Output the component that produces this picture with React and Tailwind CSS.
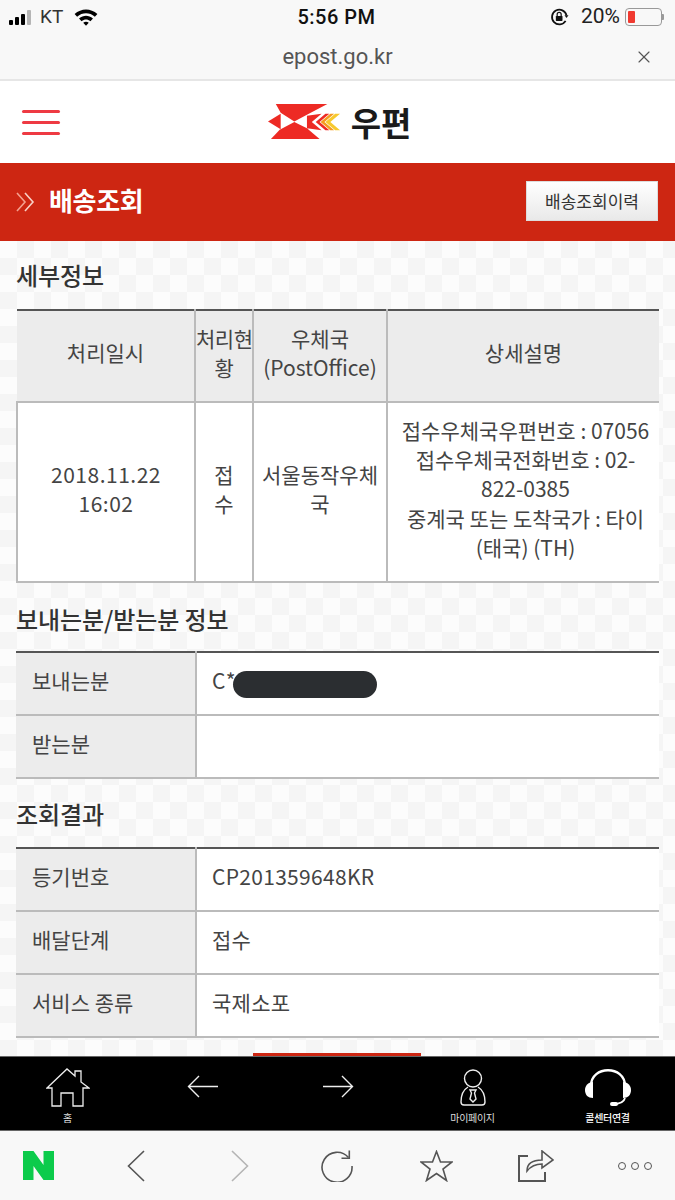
import React from "react";
import { X } from "lucide-react";

const cjk = "font-['Noto_Sans_CJK_KR','Noto_Sans',sans-serif]";

const StatusBar = () => (
  <div className="h-[34px] flex items-center justify-between pl-[9px] pr-[11px] text-[#111] font-['Roboto',sans-serif]">
    <div className="flex items-center w-[200px]">
      <div className="flex items-end gap-[2px] h-[15px]">
        <span className="w-[4px] h-[5px] bg-black rounded-[1px]" />
        <span className="w-[4px] h-[8px] bg-black rounded-[1px]" />
        <span className="w-[4px] h-[11px] bg-black rounded-[1px]" />
        <span className="w-[4px] h-[15px] bg-[#b5b5b5] rounded-[1px]" />
      </div>
      <span className="ml-[9px] text-[19px] text-[#333]">KT</span>
      <svg className="ml-[11px]" width="24" height="18" viewBox="0 0 20 15">
        <path d="M0.5 5 C6 0 14 0 19.5 5 L17.4 7.2 C13 3.4 7 3.4 2.6 7.2Z" fill="#000" />
        <path d="M4.2 8.8 C8 5.6 12 5.6 15.8 8.8 L13.7 11 C11.3 9.2 8.7 9.2 6.3 11Z" fill="#000" />
        <path d="M7.7 12.2 C9 11.2 11 11.2 12.3 12.2 L10 14.8Z" fill="#000" />
      </svg>
    </div>
    <span className="text-[20px] font-medium tracking-[0.5px]">5:56 PM</span>
    <div className="flex items-center justify-end w-[200px]">
      <svg width="19" height="20" viewBox="0 0 17 18" fill="none">
        <path d="M14 12.5 A6.6 6.6 0 1 1 14.8 7.5" stroke="#111" strokeWidth="1.6" />
        <path d="M13 7.5 L16.6 7.5 L14.8 10Z" fill="#111" />
        <rect x="5.2" y="8" width="6" height="4.6" rx="0.6" fill="#111" />
        <path d="M6.4 8 V6.6 A1.8 1.8 0 0 1 10 6.6 V8" stroke="#111" strokeWidth="1.1" />
      </svg>
      <span className="ml-[12px] text-[21px] text-[#222]">20%</span>
      <div className="ml-[5px] w-[37px] h-[18px] border border-[#999] rounded-[4px] p-[2px]">
        <div className="w-[7px] h-full bg-[#f03a30] rounded-[1px]" />
      </div>
      <span className="w-[2px] h-[6px] bg-[#999] rounded-r-[1px]" />
    </div>
  </div>
);

const Logo = () => (
  <svg width="74" height="36" viewBox="0 0 76 37">
    <path d="M8 0 H61 L40 11 L27 18 L13 9 Z" fill="#ed2a24" />
    <path d="M0 18 L13 10 V26 Z" fill="#ed2a24" />
    <path d="M3 36 L12 26.5 L27 18.5 L40 25 L53 36 Z" fill="#ed2a24" />
    <path d="M40 12 L55 10 L45 18.5 L55 27 L40 25 Z" fill="#ed2a24" />
    <path d="M59 10 L49 18.5 L59 27 H63 L53 18.5 L63 10 Z" fill="#ed2a24" />
    <path d="M64 10 L54 18.5 L64 27 H68 L58 18.5 L68 10 Z" fill="#f59b1f" />
    <path d="M69 10 L59 18.5 L69 27 H74 L64 18.5 L74 10 Z" fill="#f7c92e" />
  </svg>
);

const Header = () => (
  <div className="h-[82px] bg-white flex items-center relative">
    <div className="ml-[22px] flex flex-col gap-[8px] w-[38px]">
      <span className="h-[3px] bg-[#ee3a43] rounded-full" />
      <span className="h-[3px] bg-[#ee3a43] rounded-full" />
      <span className="h-[3px] bg-[#ee3a43] rounded-full" />
    </div>
    <div className="flex-1 flex justify-center items-center pr-[56px]">
      <Logo />
      <span className={`ml-[9px] text-[33px] leading-none font-bold text-[#1a1a1a] ${cjk}`}>우편</span>
    </div>
  </div>
);

const SectionTitle = ({ children, className }) => (
  <h2 className={`text-[24px] leading-[32px] font-medium text-[#333] tracking-[-0.1px] ${className}`}>{children}</h2>
);

const DetailTable = () => (
  <table className="w-[643px] table-fixed border-collapse border-t-2 border-t-[#555] text-[21px] leading-[29px] text-[#444] text-center">
    <colgroup>
      <col className="w-[178px]" />
      <col className="w-[58px]" />
      <col className="w-[134px]" />
      <col />
    </colgroup>
    <thead>
      <tr className="h-[92px] bg-[#ececec]">
        <th className="font-normal pb-[7px] border-2 border-t-0 border-l-0 border-[#bbb]">처리일시</th>
        <th className="font-normal pb-[7px] whitespace-nowrap tracking-[-0.5px] border-2 border-t-0 border-[#bbb]">처리현<br />황</th>
        <th className="font-normal pb-[7px] border-2 border-t-0 border-[#bbb]">우체국<br />(PostOffice)</th>
        <th className="font-normal pb-[7px] border-b-2 border-[#bbb]">상세설명</th>
      </tr>
    </thead>
    <tbody>
      <tr className="h-[180px] bg-white">
        <td className="border-2 border-[#bbb] pb-[7px] tracking-[0.5px]">2018.11.22<br />16:02</td>
        <td className="border-2 border-[#bbb] pb-[7px]">접<br />수</td>
        <td className="border-2 border-[#bbb] pb-[7px] px-[8px]">서울동작우체국</td>
        <td className="border-b-2 border-[#bbb] pb-[6px] pl-[4px] whitespace-nowrap leading-[29.3px]">
          접수우체국우편번호 : 07056<br />접수우체국전화번호 : 02-<br />822-0385<br />중계국 또는 도착국가 : 타이<br />(태국) (TH)
        </td>
      </tr>
    </tbody>
  </table>
);

const InfoTable = ({ rows }) => (
  <table className="w-[643px] table-fixed border-collapse border-t-2 border-t-[#555] text-[21px] text-[#444]">
    <colgroup>
      <col className="w-[180px]" />
      <col />
    </colgroup>
    <tbody>
      {rows.map((row) => (
        <tr key={row[0]} className="h-[63px]">
          <th className="font-normal text-left pl-[16px] pb-[5px] bg-[#ececec] border-r-2 border-b-2 border-[#bbb]">{row[0]}</th>
          <td className="bg-white pl-[15px] pb-[5px] border-b-2 border-[#bbb] tracking-[0.3px]">{row[1]}</td>
        </tr>
      ))}
    </tbody>
  </table>
);

const Sender = () => (
  <div className="flex items-center">
    <span>C*</span>
    <span className="-ml-[3px] mt-[7px] w-[144px] h-[27px] rounded-full bg-[#2b2e31]" />
  </div>
);

const BottomNav = () => (
  <div className={`h-[75px] bg-black border-y border-[#666] grid grid-cols-5 text-[10px] text-[#ddd] ${cjk}`}>
    <div className="flex flex-col items-center pt-[11px]">
      <svg width="44" height="40" viewBox="0 0 44 40" fill="none" stroke="#eee" strokeWidth="1.3">
        <path d="M1 20 L21 1 L29 8 V3 H35 V14 L43 20 H37 V38 H27 V25 H15 V38 H6 V20 Z" />
      </svg>
      <span className="leading-none mt-[5px]">홈</span>
    </div>
    <div className="flex justify-center pt-[18px]">
      <svg width="32" height="24" viewBox="0 0 32 24" fill="none" stroke="#eee" strokeWidth="1.4">
        <path d="M31 11.5 H2 M12 1 L1.5 11.5 L12 22" />
      </svg>
    </div>
    <div className="flex justify-center pt-[18px]">
      <svg width="32" height="24" viewBox="0 0 32 24" fill="none" stroke="#eee" strokeWidth="1.4">
        <path d="M1 11.5 H30 M20 1 L30.5 11.5 L20 22" />
      </svg>
    </div>
    <div className="flex flex-col items-center pt-[12px]">
      <svg width="26" height="38" viewBox="0 0 26 38" fill="none" stroke="#eee" strokeWidth="1.4">
        <circle cx="13" cy="9.5" r="8.5" />
        <path d="M8 18 C3 21 1 27 1 33 Q1 36 4 36 H22 Q25 36 25 33 C25 27 23 21 18 18" />
        <path d="M10 21 H16 L14.5 24 L16 30 L13 33 L10 30 L11.5 24 Z" />
      </svg>
      <span className="leading-none mt-[6px] tracking-[-0.3px]">마이페이지</span>
    </div>
    <div className="flex flex-col items-center pt-[11px]">
      <svg width="46" height="40" viewBox="0 0 46 40" fill="none">
        <path d="M6 18 C6 -3 40 -3 40 18" stroke="#fff" strokeWidth="2.4" />
        <path d="M8 14 C3 14 0 18 0 22 C0 27 3 30 8 30Z" fill="#fff" />
        <path d="M38 14 C43 14 46 18 46 22 C46 27 43 30 38 30Z" fill="#fff" />
        <path d="M40 30 C39 34 34 36 28 36" stroke="#fff" strokeWidth="1.8" />
        <rect x="25" y="34" width="8" height="4" rx="2" fill="#fff" />
      </svg>
      <span className="leading-none mt-[5px] font-medium tracking-[-0.3px] text-white">콜센터연결</span>
    </div>
  </div>
);

const SafariBar = () => (
  <div className="h-[69px] bg-[#f8f8f8] flex items-center pl-[23px]">
    <svg width="31" height="29" viewBox="0 0 31 29">
      <path d="M0 0 H10.5 L20.5 14 V0 H31 V29 H20.5 L10.5 15 V29 H0 Z" fill="#0ccb4b" />
    </svg>
    <svg className="ml-[73px]" width="18" height="32" viewBox="0 0 18 32" fill="none" stroke="#555" strokeWidth="1.6">
      <path d="M17 1 L1.5 16 L17 31" />
    </svg>
    <svg className="ml-[86px]" width="18" height="32" viewBox="0 0 18 32" fill="none" stroke="#b5b5b5" strokeWidth="1.6">
      <path d="M1 1 L16.5 16 L1 31" />
    </svg>
    <svg className="ml-[72px]" width="32" height="32" viewBox="0 0 32 32" fill="none" stroke="#555" strokeWidth="1.6">
      <path d="M31 16 A15 15 0 1 1 27.5 7.6" />
      <path d="M20.5 8.3 H28.3 V0.5" />
    </svg>
    <svg className="ml-[67px]" width="33" height="32" viewBox="0 0 33 32" fill="none" stroke="#555" strokeWidth="1.6">
      <path d="M16.5 1.5 L20.5 12 H32 L23 19 L26.5 30.5 L16.5 23.5 L6.5 30.5 L10 19 L1 12 H12.5 Z" />
    </svg>
    <svg className="ml-[65px]" width="36" height="32" viewBox="0 0 36 32" fill="none" stroke="#555" strokeWidth="1.6">
      <path d="M10 6 H1 V31 H27 V22" strokeWidth="2" />
      <path d="M9 21 C9 14 14 10 24 10 V1 L35 10 L24 18 V14 C17 14 13 16 9 21 Z" />
    </svg>
    <div className="ml-[64px] flex gap-[5px]">
      <span className="w-[8px] h-[8px] rounded-full border-[1.5px] border-[#555]" />
      <span className="w-[8px] h-[8px] rounded-full border-[1.5px] border-[#555]" />
      <span className="w-[8px] h-[8px] rounded-full border-[1.5px] border-[#555]" />
    </div>
  </div>
);

export default function App() {
  return (
    <div className={`w-[675px] h-[1200px] flex flex-col overflow-hidden bg-white ${cjk}`}>
      <div className="bg-[#f8f8f8] border-b-2 border-[#e6e6e6] h-[81px]">
        <StatusBar />
        <div className="h-[45px] flex items-center justify-center relative text-[22px] text-[#555] font-['Roboto',sans-serif]">
          <span>epost.go.kr</span>
          <X className="absolute right-[21px] top-[13px]" size={20} strokeWidth={1.4} color="#555" />
        </div>
      </div>
      <Header />
      <div className="h-[78px] bg-[#cd2612] flex items-center justify-between pl-[15px] pr-[17px]">
        <div className="flex items-center">
          <svg width="22" height="22" viewBox="0 0 22 22" fill="none" strokeWidth="1.6">
            <path d="M2 2 L10 11 L2 20" stroke="#f4a08f" />
            <path d="M10 2 L18 11 L10 20" stroke="#f8d0c6" />
          </svg>
          <span className="ml-[12px] mb-[6px] text-[26px] font-bold text-white tracking-[-0.3px]">배송조회</span>
        </div>
        <button className="w-[132px] h-[40px] mb-[2px] bg-gradient-to-b from-white to-[#e9e9e9] border border-[#ddd] text-[17px] text-[#333]">
          배송조회이력
        </button>
      </div>
      <div className="flex-1 min-h-0 overflow-hidden pl-[16px] bg-[repeating-conic-gradient(#f5f5f5_0_25%,#fcfcfc_0_50%)] bg-[length:34px_34px]">
        <SectionTitle className="mt-[18px] mb-[18px]">세부정보</SectionTitle>
        <DetailTable />
        <SectionTitle className="mt-[20px] mb-[16px]">보내는분/받는분 정보</SectionTitle>
        <InfoTable rows={[["보내는분", <Sender />], ["받는분", ""]]} />
        <SectionTitle className="mt-[19px] mb-[17px]">조회결과</SectionTitle>
        <InfoTable rows={[["등기번호", "CP201359648KR"], ["배달단계", "접수"], ["서비스 종류", "국제소포"]]} />
        <div className="ml-[237px] mt-[15px] w-[168px] h-[10px] bg-[#cd2612]" />
      </div>
      <BottomNav />
      <SafariBar />
    </div>
  );
}
